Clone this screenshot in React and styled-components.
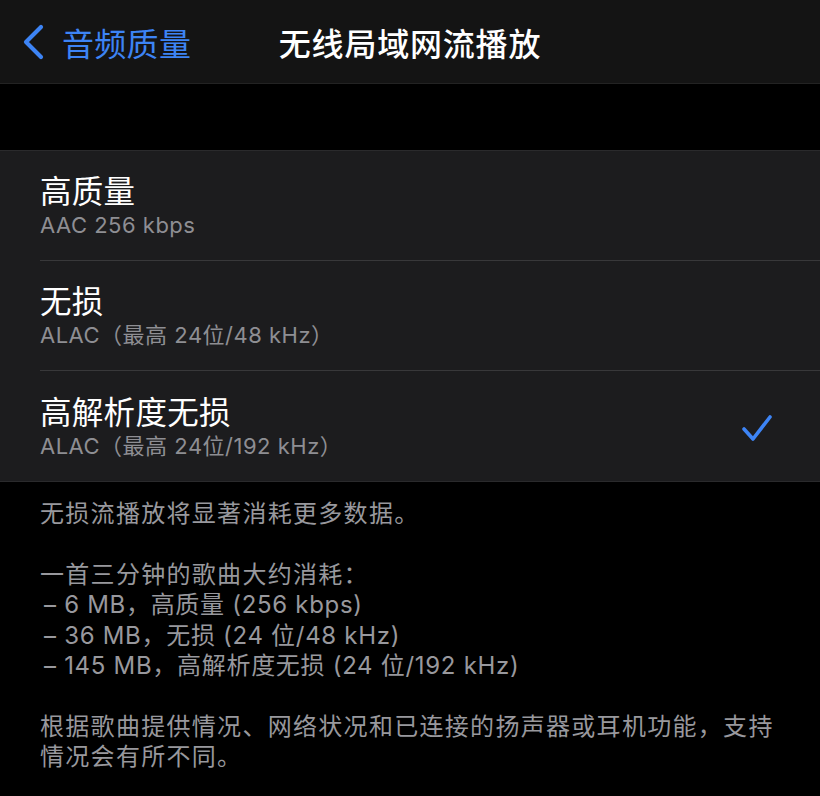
import React from 'react'
import styled, { createGlobalStyle } from 'styled-components'

const GlobalStyle = createGlobalStyle`
  html, body {
    margin: 0;
    padding: 0;
    background: #000;
  }
  body {
    font-family: Inter, "Noto Sans CJK SC", sans-serif;
    -webkit-font-smoothing: antialiased;
  }
`

const options = [
  { title: '高质量', detail: 'AAC 256 kbps' },
  { title: '无损', detail: 'ALAC（最高 24位/48 kHz）' },
  { title: '高解析度无损', detail: 'ALAC（最高 24位/192 kHz）', selected: true },
]

const usage = [
  '– 6 MB，高质量 (256 kbps)',
  '– 36 MB，无损 (24 位/48 kHz)',
  '– 145 MB，高解析度无损 (24 位/192 kHz)',
]

const BackIcon = () => (
  <svg width="26" height="36" viewBox="0 0 26 36">
    <path d="M20 3 L5 18 L20 33" fill="none" stroke="#3d84f5" strokeWidth="4.2"
      strokeLinecap="round" strokeLinejoin="round"/>
  </svg>
)

const CheckIcon = () => (
  <svg width="34" height="32" viewBox="0 0 34 32">
    <path d="M4 17 L13 27 L30 5" fill="none" stroke="#3d84f5" strokeWidth="3.6"
      strokeLinecap="round" strokeLinejoin="round"/>
  </svg>
)

const App = () => (
  <Page>
    <GlobalStyle/>
    <NavBar>
      <BackButton>
        <BackIcon/>
        <span>音频质量</span>
      </BackButton>
      <NavTitle>无线局域网流播放</NavTitle>
    </NavBar>

    <Group>
      {options.map((opt, i) =>
        <Row key={i} last={i === options.length - 1}>
          <RowText>
            <RowTitle>{opt.title}</RowTitle>
            <RowDetail>{opt.detail}</RowDetail>
          </RowText>
          {opt.selected && <CheckIcon/>}
        </Row>
      )}
    </Group>

    <Footer>
      <p>无损流播放将显著消耗更多数据。</p>
      <p>
        一首三分钟的歌曲大约消耗：
        {usage.map((line, i) => <ListLine key={i}>{line}</ListLine>)}
      </p>
      <p>根据歌曲提供情况、网络状况和已连接的扬声器或耳机功能，支持情况会有所不同。</p>
    </Footer>
  </Page>
)

const Page = styled.div`
  width: 820px;
  min-height: 796px;
  background: #000;
  overflow: hidden;
`

const NavBar = styled.header`
  height: 83px;
  background: #141414;
  border-bottom: 1px solid #232323;
  display: flex;
  align-items: center;
  position: relative;
  padding: 0 0 0 21px;
`

const BackButton = styled.div`
  display: flex;
  align-items: center;
  gap: 15px;
  color: #3d84f5;
  font-size: 32px;
  font-family: "Noto Sans CJK SC", sans-serif;
  span {
    letter-spacing: 0.3px;
  }
`

const NavTitle = styled.h1`
  position: absolute;
  left: 0;
  right: 0;
  margin: 0;
  text-align: center;
  pointer-events: none;
  color: #fff;
  font-size: 32px;
  font-weight: 500;
  font-family: "Noto Sans CJK SC", sans-serif;
  letter-spacing: 0.8px;
`

const Group = styled.section`
  margin-top: 66px;
  background: #1c1c1e;
  border-top: 1px solid #2a2a2c;
  border-bottom: 1px solid #2a2a2c;
  padding-left: 40px;
`

const Row = styled.div`
  height: 110px;
  box-sizing: border-box;
  display: flex;
  align-items: center;
  justify-content: space-between;
  padding-right: 46px;
  border-bottom: ${props => props.last ? 'none' : '1px solid #38383a'};
  svg {
    margin-top: 4px;
  }
`

const RowText = styled.div`
  display: flex;
  flex-direction: column;
  gap: 3px;
  margin-top: -2px;
`

const RowTitle = styled.div`
  color: #fff;
  font-size: 31.5px;
  line-height: 38px;
  font-family: "Noto Sans CJK SC", sans-serif;
  letter-spacing: 0.3px;
`

const RowDetail = styled.div`
  color: #8e8e93;
  font-size: 22px;
  line-height: 28px;
  letter-spacing: 0.5px;
`

const Footer = styled.footer`
  padding: 17px 40px 0 40px;
  color: #98989d;
  font-size: 24px;
  line-height: 30.4px;
  letter-spacing: 1.3px;
  p {
    margin: 0 0 30.4px 0;
  }
`

const ListLine = styled.div`
  padding-left: 4px;
  letter-spacing: 0.7px;
`

export default App
